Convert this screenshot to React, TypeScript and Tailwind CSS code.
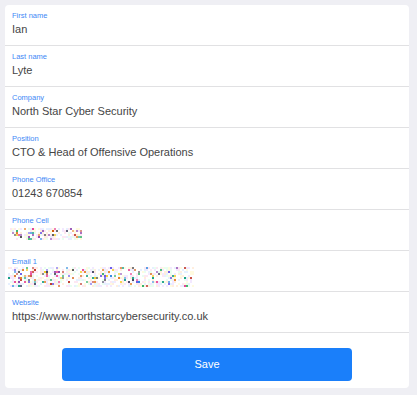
import React from "react";

const fields: { label: string; value?: string; blur?: { w: number; h: number; seed: number } }[] = [
  { label: "First name", value: "Ian" },
  { label: "Last name", value: "Lyte" },
  { label: "Company", value: "North Star Cyber Security" },
  { label: "Position", value: "CTO & Head of Offensive Operations" },
  { label: "Phone Office", value: "01243 670854" },
  { label: "Phone Cell", blur: { w: 72, h: 12, seed: 7 } },
  { label: "Email 1", blur: { w: 186, h: 20, seed: 13 } },
  { label: "Website", value: "https://www.northstarcybersecurity.co.uk" },
];

function rng(seed: number) {
  let s = seed * 9301 + 49297;
  return () => {
    s = (s * 9301 + 49297) % 233280;
    return s / 233280;
  };
}

const palette = ["#3a3a5a", "#c0392b", "#2e86de", "#27ae60", "#8e44ad", "#e67e22", "#f1c40f", "#16a085", "#555", "#d35400", "#6c5ce7", "#e84393"];
const pastel = ["#fde7f3", "#e6f0ff", "#fffbe0", "#e8fff0", "#f3e8ff", "#ffeede"];

function Noise({ w, h, seed }: { w: number; h: number; seed: number }) {
  const r = rng(seed);
  const rects: React.ReactNode[] = [];
  const cols = Math.floor(w / 2);
  const rows = Math.floor(h / 2);
  for (let y = 0; y < rows; y++) {
    for (let x = 0; x < cols; x++) {
      const v = r();
      const yy = y * 2;
      const mid = h / 2;
      const dist = Math.abs(yy + 1 - mid) / mid;
      if (v < 0.24 * (1 - dist * 0.7)) {
        rects.push(<rect key={`${x}-${y}`} x={x * 2} y={yy} width={2} height={2} fill={palette[Math.floor(r() * palette.length)]} opacity={0.55 + r() * 0.45} />);
      } else if (v < 0.6) {
        rects.push(<rect key={`${x}-${y}`} x={x * 2} y={yy} width={2} height={2} fill={pastel[Math.floor(r() * pastel.length)]} />);
      }
    }
  }
  return (
    <svg width={w} height={h} viewBox={`0 0 ${w} ${h}`} className="block">
      {rects}
    </svg>
  );
}

export default function App() {
  return (
    <div className="w-[417px] h-[395px] bg-[#efeff4] pt-[5px] pl-[5px]" style={{ fontFamily: '"Liberation Sans", Arial, sans-serif' }}>
      <div className="w-[404px] bg-white rounded-[4px] overflow-hidden">
        {fields.map((f) => (
          <div key={f.label} className="h-[41px] border-b border-[#e1e1e3] px-[7px] pt-[7px]">
            <div className="text-[7.5px] leading-[8px] text-[#4289f6]">{f.label}</div>
            {f.value ? (
              <div className="mt-[3px] text-[11px] leading-[13px] text-[#454545]">{f.value}</div>
            ) : (
              <div className={f.label === "Email 1" ? "mt-[1px] -ml-[4px]" : "mt-[3px] -ml-[2px]"}>
                <Noise {...f.blur!} />
              </div>
            )}
          </div>
        ))}
        <div className="flex justify-center pt-[15px] pb-[7px]">
          <button className="w-[290px] h-[33px] rounded-[4px] bg-[#1a7ffa] text-white text-[11px]">Save</button>
        </div>
      </div>
    </div>
  );
}
